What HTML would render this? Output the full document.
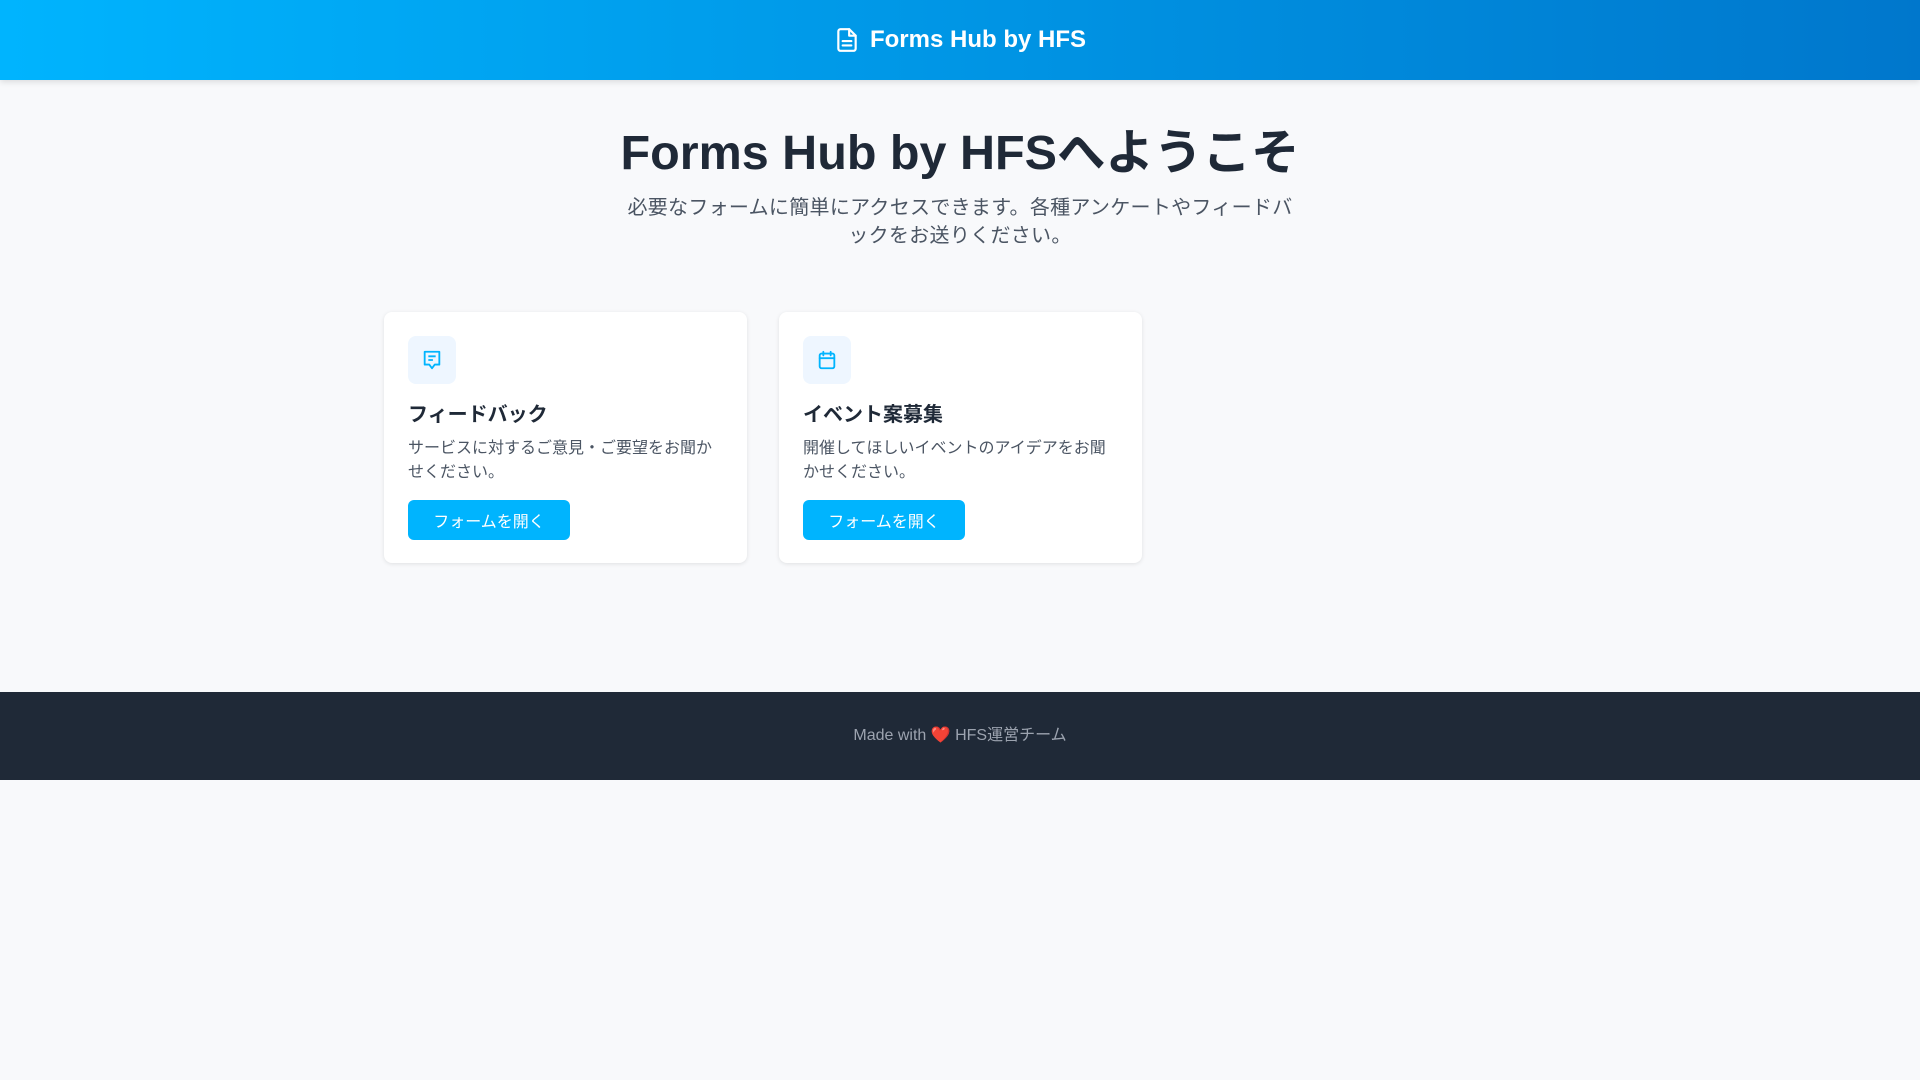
<!DOCTYPE html>
<html><head><meta charset="utf-8"><style>
*{box-sizing:border-box;margin:0;padding:0}
body{width:1920px;height:1080px;background:#f8f9fb;font-family:"Liberation Sans","Noto Sans CJK JP",sans-serif;color:#1f2937}
header{height:80px;background:linear-gradient(90deg,#00b4fe,#0077cc);display:flex;align-items:center;justify-content:center;color:#fff;font-weight:bold;font-size:24px;box-shadow:0 2px 6px rgba(0,0,0,.12)}
header svg{margin-right:10px}
main{height:612px;position:relative}
h1{position:absolute;top:42px;left:0;right:0;text-align:center;font-size:48.5px;font-weight:bold;color:#1f2937;line-height:62px}
.sub{position:absolute;top:114px;left:620px;width:680px;text-align:center;font-size:20px;letter-spacing:0.3px;line-height:28px;color:#4b5563}
.card{position:absolute;top:232px;width:363px;height:251px;background:#fff;border-radius:8px;box-shadow:0 1px 4px rgba(0,0,0,.1);padding:24px}
.ic{width:48px;height:48px;background:#eef6ff;border-radius:8px;display:flex;align-items:center;justify-content:center}
.card h3{margin-top:17px;font-size:20px;line-height:28px;font-weight:bold;color:#1f2937}
.card p{margin-top:8px;font-size:16px;line-height:24px;color:#4b5563}
.btn{position:absolute;left:24px;top:188px;width:162px;height:40px;border-radius:6px;background:#00b4fe;color:#fff;font-size:16px;display:flex;align-items:center;justify-content:center}
footer{height:88px;background:#1f2937;color:#9ca3af;font-size:16px;display:flex;align-items:center;justify-content:center;line-height:20px}
</style></head><body>
<header><svg width="26" height="28" viewBox="0 0 24 24" fill="none" stroke="#fff" stroke-width="2" stroke-linecap="round" stroke-linejoin="round"><path d="M14 2H6a2 2 0 0 0-2 2v16a2 2 0 0 0 2 2h12a2 2 0 0 0 2-2V8z"/><path d="M14 2v6h6"/><path d="M8 13h8M8 17h8"/></svg>Forms Hub by HFS</header>
<main>
<h1>Forms Hub by HFSへようこそ</h1>
<div class="sub">必要なフォームに簡単にアクセスできます。各種アンケートやフィードバックをお送りください。</div>
<div class="card" style="left:384px"><div class="ic"><svg width="22" height="22" viewBox="0 0 24 24" fill="none" stroke="#00b4fe" stroke-width="2" stroke-linejoin="round"><path d="M4 3h16v14h-5l-3 4-3-4H4z"/><path d="M8 8h8M8 12h5"/></svg></div><h3>フィードバック</h3><p>サービスに対するご意見・ご要望をお聞かせください。</p><div class="btn">フォームを開く</div></div>
<div class="card" style="left:779px"><div class="ic"><svg width="22" height="22" viewBox="0 0 24 24" fill="none" stroke="#00b4fe" stroke-width="2" stroke-linecap="round"><rect x="4" y="5" width="16" height="16" rx="2"/><path d="M8 3v4M16 3v4M4 10h16"/></svg></div><h3>イベント案募集</h3><p>開催してほしいイベントのアイデアをお聞かせください。</p><div class="btn">フォームを開く</div></div>
</main>
<footer><span>Made with <span style="color:#ef4444">❤️</span> HFS運営チーム</span></footer>
</body></html>
